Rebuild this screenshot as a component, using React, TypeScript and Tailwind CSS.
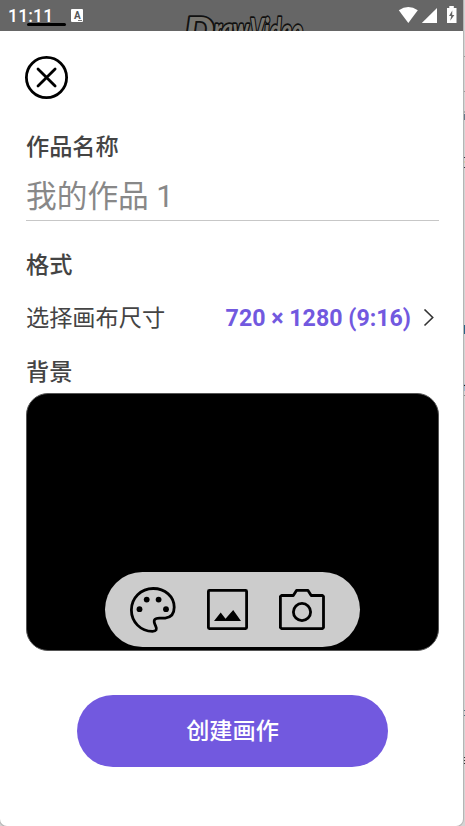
import type { FC, ReactNode } from "react";

interface SectionTitleInterface {
    children: ReactNode;
}

const SectionTitle: FC<SectionTitleInterface> = ({ children }) => {
    return (
        <h2 className="h-[34px] text-[23.2px] leading-[34px] font-medium text-[#444444]">
            {children}
        </h2>
    );
};

const StatusBar: FC = () => {
    return (
        <header className="relative flex h-[31px] shrink-0 items-center overflow-hidden bg-[#666666] pl-2 text-white">
            {/* menu line and app logo of the dimmed page underneath */}
            <div className="absolute top-[23px] left-[27px] h-[3px] w-[39px] rounded-full bg-black"></div>
            <svg className="absolute top-0 left-[180px]" width="130" height="31" viewBox="0 0 130 31">
                <g
                    fill="#77756f"
                    stroke="#111111"
                    strokeWidth="3.4"
                    strokeLinejoin="round"
                    paintOrder="stroke"
                    fontFamily="Lato, sans-serif"
                    fontWeight="900"
                    fontStyle="italic"
                >
                    <text x="5" y="43" fontSize="36" textLength="29" lengthAdjust="spacingAndGlyphs">D</text>
                    <text x="34" y="40" fontSize="30" textLength="35" lengthAdjust="spacingAndGlyphs">raw</text>
                    <text x="70" y="43" fontSize="35" textLength="53" lengthAdjust="spacingAndGlyphs">Video</text>
                </g>
            </svg>

            <span className="relative text-[17.5px] leading-5 font-medium tracking-[0.2px]">11:11</span>
            <span className="relative ml-[18px] flex h-[13px] w-[12px] items-center justify-center rounded-[1px] bg-white text-[10px] leading-none font-bold text-[#555555]">
                A
                <span className="absolute right-[1px] bottom-[1px] h-px w-[4px] bg-[#777777]"></span>
            </span>

            <svg className="relative -top-px ml-auto" width="66" height="17" viewBox="0 0 66 17" fill="currentColor">
                <path d="M1.8 4.2Q11.3-2.2 20.8 4.2L11.3 17Z" />
                <path d="M40 2V17H24.8Z" />
                <path d="M52.3 0h4.5v2h2.7V17H50V2h2.3Z" />
                <path d="M55.3 4.5L52 10h2.2l-1 4.8L57.4 9H55.2Z" fill="#666666" />
            </svg>
        </header>
    );
};

const PaletteIcon: FC = () => {
    return (
        <svg width="46" height="46" viewBox="0 0 46 46" fill="none">
            <path
                d="M23.2 1.5C10.8 1.5 1.4 11.2 1.4 23.1C1.4 34.9 10.5 44.3 22.5 44.3C26.5 44.3 27.2 42.3 25.7 39.2C22.7 33.3 24.2 31.2 29.5 31.1H35.2C41.5 30.5 44.2 26.1 44.2 20.3C44.2 9.6 35.1 1.5 23.2 1.5Z"
                stroke="black"
                strokeWidth="2.8"
            />
            <g fill="black">
                <circle cx="9.5" cy="22.2" r="2.9" />
                <circle cx="16.7" cy="12.6" r="2.9" />
                <circle cx="28.6" cy="12.6" r="2.9" />
                <circle cx="36" cy="22.2" r="2.9" />
            </g>
        </svg>
    );
};

const PictureIcon: FC = () => {
    return (
        <svg width="41" height="41" viewBox="0 0 41 41" fill="none">
            <rect x="1.4" y="1.4" width="38.2" height="38.2" rx="1" stroke="black" strokeWidth="2.8" />
            <path d="M7 32L13.7 23.5L18.5 29.7L26.2 21L34 32Z" fill="black" />
        </svg>
    );
};

const CameraIcon: FC = () => {
    return (
        <svg width="46" height="41" viewBox="0 0 46 41" fill="none" stroke="black" strokeWidth="2.8" strokeLinejoin="round">
            <path d="M2.5 6.5H14.3L17.5 1.4H29L32.2 6.5H43.5L44.5 7.5V38.6L43.5 39.6H2.5L1.4 38.5V7.5Z" />
            <circle cx="23" cy="23" r="8.6" />
        </svg>
    );
};

// specks of the window behind, visible along the right edge
const specks = [
    { top: 56, height: 1, color: "#999999" },
    { top: 91, height: 1, color: "#999999" },
    { top: 111, height: 2, color: "#aaaaaa" },
    { top: 114, height: 6, color: "#657789" },
    { top: 157, height: 1, color: "#333344" },
    { top: 161, height: 2, color: "#d5cdb0" },
    { top: 167, height: 1, color: "#333344" },
    { top: 325, height: 9, color: "#276485" },
    { top: 384, height: 7, color: "#9cb9d0" },
    { top: 385, height: 1, color: "#222222" },
    { top: 395, height: 1, color: "#888888" },
    { top: 710, height: 1, color: "#557080" },
    { top: 715, height: 1, color: "#557080" },
    { top: 757, height: 1, color: "#333333" },
    { top: 760, height: 1, color: "#333333" },
    { top: 763, height: 1, color: "#333333" },
];

const App: FC = () => {
    return (
        <div className="relative h-[826px] w-[465px] overflow-hidden bg-[#d4d4d4] font-['Roboto','Noto_Sans_CJK_SC',sans-serif]">
            {specks.map((speck) => (
                <div
                    key={speck.top}
                    className="absolute right-0 w-[2px]"
                    style={{ top: speck.top, height: speck.height, backgroundColor: speck.color }}
                ></div>
            ))}

            <div className="relative flex h-[826px] w-[463px] flex-col overflow-hidden rounded-b-[7px] bg-white shadow-[0_0_0_1px_#b5b5b5]">
                <StatusBar />

                <main className="flex flex-col pr-6 pl-[26px]">
                    <button className="mt-[25px] -ml-[2px] h-11 w-11" aria-label="关闭">
                        <svg width="44" height="44" viewBox="0 0 44 44" fill="none" stroke="black" strokeWidth="2.8" strokeLinecap="round">
                            <circle cx="22.5" cy="21.5" r="20.1" />
                            <path d="M14 13L31.1 30.1M31.1 13L14 30.1" />
                        </svg>
                    </button>

                    <div className="mt-[30px]">
                        <SectionTitle>作品名称</SectionTitle>
                    </div>
                    <div className="mt-[9px] h-[48px] border-b border-[#c7c7c7] text-[30.7px] leading-[48px] text-[#888888]">
                        我的作品 1
                    </div>

                    <div className="mt-[27px]">
                        <SectionTitle>格式</SectionTitle>
                    </div>
                    <button className="mt-[19px] flex h-[34px] items-center text-left">
                        <span className="text-[23.2px] leading-[34px] text-[#444444]">选择画布尺寸</span>
                        <span className="ml-auto text-[23.2px] leading-[34px] font-bold text-[#7259df]">720 × 1280 (9:16)</span>
                        <svg className="mr-1 ml-3" width="12" height="18" viewBox="0 0 12 18" fill="none" stroke="#333333" strokeWidth="1.6">
                            <path d="M1.5 0.5L9.7 8.5L1.5 16.5" />
                        </svg>
                    </button>

                    <div className="mt-5">
                        <SectionTitle>背景</SectionTitle>
                    </div>
                    <div className="mt-1 flex h-[258px] items-end justify-center rounded-[22px] border border-[#555555] bg-black pb-[3px]">
                        <div className="flex h-[75px] w-[255px] items-center rounded-full bg-[#cccccc] pl-[24.5px]">
                            <PaletteIcon />
                            <div className="ml-[31px]">
                                <PictureIcon />
                            </div>
                            <div className="ml-[31px]">
                                <CameraIcon />
                            </div>
                        </div>
                    </div>

                    <button className="mt-11 h-[72px] w-[311px] self-center rounded-full bg-[#7259df] text-[23.2px] leading-[72px] font-medium text-white">
                        创建画作
                    </button>
                </main>
            </div>
        </div>
    );
};

export default App;
